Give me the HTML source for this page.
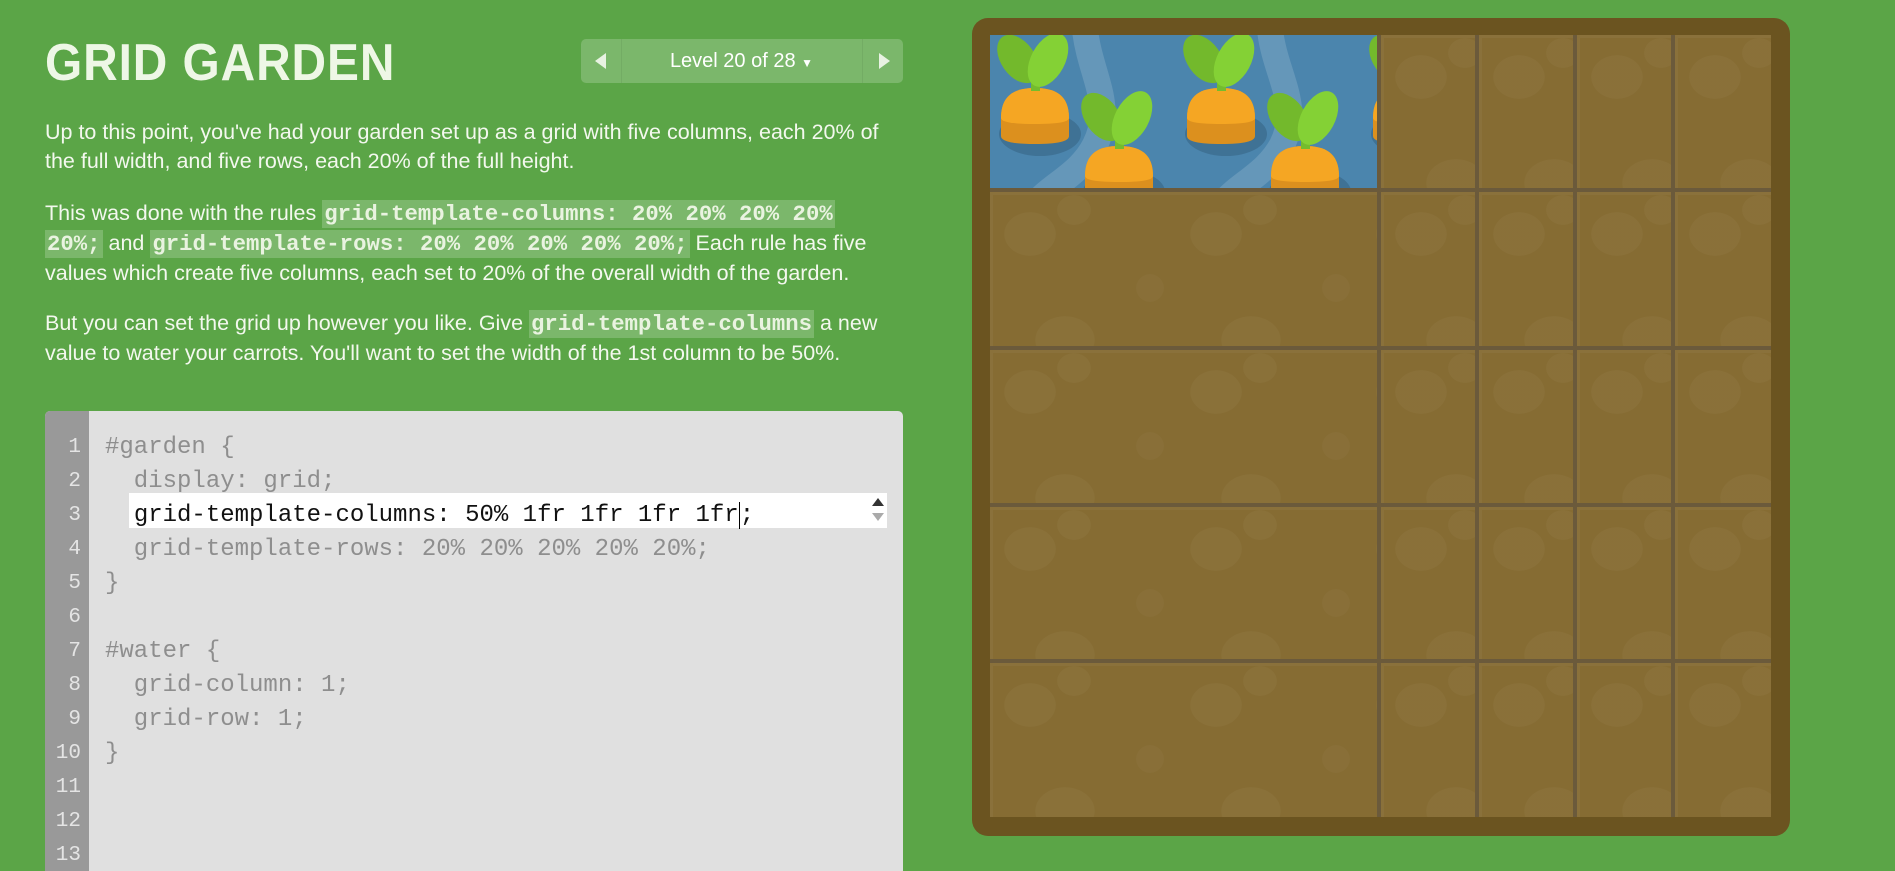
<!DOCTYPE html>
<html><head><meta charset="utf-8"><style>
*{margin:0;padding:0;box-sizing:border-box}
body{width:1895px;height:859px;background:#5ba547;overflow:hidden;position:relative;font-family:"Liberation Sans",sans-serif;color:#f3f8ee}
.abs{position:absolute}
h1{position:absolute;left:45px;top:33px;font-size:52px;font-weight:bold;color:#eef7e6;transform:scaleX(.92);transform-origin:left top;letter-spacing:1px;white-space:nowrap}
.nav{left:581px;top:39px;width:322px;height:44px;background:rgba(255,255,255,.2);border-radius:5px}
.nav .l{position:absolute;left:40px;top:0;width:1px;height:44px;background:rgba(0,0,0,.06)}
.nav .r{position:absolute;left:281px;top:0;width:1px;height:44px;background:rgba(0,0,0,.06)}
.nav .t{position:absolute;left:40px;width:241px;text-align:center;top:11px;font-size:20px;color:#fff}
.p{position:absolute;left:45px;font-size:21.5px;line-height:29px;white-space:nowrap;color:#f3f8ee}
code{font-family:"Liberation Mono",monospace;font-weight:bold;font-size:22.3px;background:rgba(255,255,255,.2);padding:1px 2px;color:#e9f3e0}
.ed{left:45px;top:411px;width:858px;height:460px;background:#e0e0e0;border-radius:5px 5px 0 0;overflow:hidden}
.gut{position:absolute;left:0;top:0;width:44px;height:100%;background:#999}
.ln{position:absolute;left:0;width:36px;text-align:right;font-family:"Liberation Mono",monospace;font-size:21px;color:#e4e4e4}
.cl{position:absolute;left:60px;font-family:"Liberation Mono",monospace;font-size:24px;color:#8e8e8e;white-space:pre}
.inp{position:absolute;left:84px;top:82px;width:758px;height:35px;background:#fff}
.garden{left:972px;top:18px;width:818px;height:818px;background:#6b5420;border-radius:16px}
.cell{position:absolute;background-color:#866c33;box-shadow:inset 3px 3px 0 rgba(255,255,255,.04);
background-image:radial-gradient(ellipse 26px 22px at 40px 42px,rgba(255,255,255,.03) 98%,transparent 100%),radial-gradient(ellipse 17px 15px at 84px 18px,rgba(255,255,255,.03) 98%,transparent 100%),radial-gradient(circle 14px at 160px 96px,rgba(255,255,255,.025) 98%,transparent 100%),radial-gradient(ellipse 30px 24px at 75px 148px,rgba(255,255,255,.03) 98%,transparent 100%);
background-size:186px 157px}
</style></head><body>
<h1>GRID GARDEN</h1>
<div class="abs nav"><div class="l"></div><div class="r"></div>
<svg class="abs" style="left:12px;top:13px" width="16" height="18"><path d="M13 1 L2 9 L13 17Z" fill="#e8f2e2"/></svg>
<div class="t">Level 20 of 28 <span style="font-size:12px">▼</span></div>
<svg class="abs" style="left:295px;top:13px" width="16" height="18"><path d="M3 1 L14 9 L3 17Z" fill="#e8f2e2"/></svg>
</div>
<div class="p" style="top:118px">Up to this point, you've had your garden set up as a grid with five columns, each 20% of<br>the full width, and five rows, each 20% of the full height.</div>
<div class="p" style="top:199px">This was done with the rules <code>grid-template-columns: 20% 20% 20% 20%</code><br><code>20%;</code> and <code>grid-template-rows: 20% 20% 20% 20% 20%;</code> Each rule has five<br>values which create five columns, each set to 20% of the overall width of the garden.</div>
<div class="p" style="top:309px">But you can set the grid up however you like. Give <code>grid-template-columns</code> a new<br>value to water your carrots. You'll want to set the width of the 1st column to be 50%.</div>

<div class="abs ed"><div class="gut"></div>
<div class="inp"><svg class="abs" style="right:2px;top:4px" width="14" height="26"><path d="M7 1 L13 9 H1Z" fill="#333"/><path d="M7 24 L13 16 H1Z" fill="#aaa"/></svg></div>
<div class="ln" style="top:20px;line-height:34px">1<br>2<br>3<br>4<br>5<br>6<br>7<br>8<br>9<br>10<br>11<br>12<br>13</div>
<div class="cl" style="top:20px;line-height:34px">#garden {
  display: grid;
  <span style="color:#111">grid-template-columns: 50% 1fr 1fr 1fr 1fr<span style="border-left:1.5px solid #000"></span>;</span>
  grid-template-rows: 20% 20% 20% 20% 20%;
}

#water {
  grid-column: 1;
  grid-row: 1;
}</div>
</div>

<div class="abs garden">
<div class="abs" style="left:18px;top:17px;width:781px;height:782px;background:#6b5a3b"></div>
<div class="cell" style="left:18px;top:174px;width:387px;height:154px"></div>
<div class="cell" style="left:18px;top:332px;width:387px;height:153px"></div>
<div class="cell" style="left:18px;top:489px;width:387px;height:152px"></div>
<div class="cell" style="left:18px;top:645px;width:387px;height:154px"></div>
<div class="cell" style="left:409px;top:17px;width:94px;height:153px"></div>
<div class="cell" style="left:507px;top:17px;width:94px;height:153px"></div>
<div class="cell" style="left:605px;top:17px;width:94px;height:153px"></div>
<div class="cell" style="left:703px;top:17px;width:96px;height:153px"></div>
<div class="cell" style="left:409px;top:174px;width:94px;height:154px"></div>
<div class="cell" style="left:507px;top:174px;width:94px;height:154px"></div>
<div class="cell" style="left:605px;top:174px;width:94px;height:154px"></div>
<div class="cell" style="left:703px;top:174px;width:96px;height:154px"></div>
<div class="cell" style="left:409px;top:332px;width:94px;height:153px"></div>
<div class="cell" style="left:507px;top:332px;width:94px;height:153px"></div>
<div class="cell" style="left:605px;top:332px;width:94px;height:153px"></div>
<div class="cell" style="left:703px;top:332px;width:96px;height:153px"></div>
<div class="cell" style="left:409px;top:489px;width:94px;height:152px"></div>
<div class="cell" style="left:507px;top:489px;width:94px;height:152px"></div>
<div class="cell" style="left:605px;top:489px;width:94px;height:152px"></div>
<div class="cell" style="left:703px;top:489px;width:96px;height:152px"></div>
<div class="cell" style="left:409px;top:645px;width:94px;height:154px"></div>
<div class="cell" style="left:507px;top:645px;width:94px;height:154px"></div>
<div class="cell" style="left:605px;top:645px;width:94px;height:154px"></div>
<div class="cell" style="left:703px;top:645px;width:96px;height:154px"></div>
<svg class="abs" style="left:18px;top:17px" width="387" height="153" viewBox="0 0 387 153">
<defs>
<clipPath id="c"><rect width="387" height="153"/></clipPath>
<g id="car">
<ellipse cx="39" cy="46" rx="41" ry="22" fill="#3c6d8f" opacity=".8"/>
<path d="M0 30 C0 6 15 0 34 0 C53 0 68 6 68 30 L68 48 Q68 56 34 56 Q0 56 0 48Z" fill="#dc901e"/>
<path d="M0 30 C0 6 15 0 34 0 C53 0 68 6 68 30 Q68 36 34 36 Q0 36 0 30Z" fill="#f5a623"/>
<rect x="30" y="-9" width="9" height="12" fill="#74bc2e"/>
<ellipse cx="17" cy="-29" rx="17" ry="27" transform="rotate(-35 17 -29)" fill="#73b92c"/>
<ellipse cx="47" cy="-28" rx="17" ry="29" transform="rotate(28 47 -28)" fill="#84d135"/>
</g>
</defs>
<g clip-path="url(#c)">
<rect width="387" height="153" fill="#4b85ad"/>
<path d="M95 -5 C100 40 125 70 105 110 C90 140 60 150 45 170" stroke="rgba(255,255,255,.15)" stroke-width="26" fill="none"/>
<path d="M280 -5 C285 40 312 70 292 110 C276 140 246 150 232 170" stroke="rgba(255,255,255,.15)" stroke-width="26" fill="none"/>
<use href="#car" x="11" y="53"/>
<use href="#car" x="95" y="111"/>
<use href="#car" x="197" y="53"/>
<use href="#car" x="281" y="111"/>
<use href="#car" x="383" y="53"/>
</g>
</svg>
</div>
</body></html>
